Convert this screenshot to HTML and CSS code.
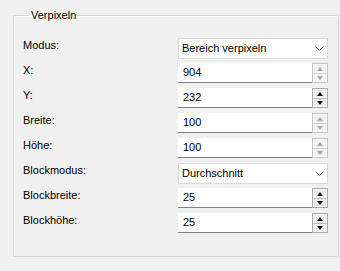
FILE: index.html
```html
<!DOCTYPE html>
<html>
<head>
<meta charset="utf-8">
<link rel="stylesheet" href="styles.css">
</head>
<body>
<fieldset class="group">
  <legend class="title">Verpixeln</legend>
  <div class="rows">
    <div class="row"><span class="label">Modus:</span>
      <div class="combo"><span class="val">Bereich verpixeln</span><svg class="chev" width="9" height="5" viewBox="0 0 9 5"><path d="M0.5 0.5 L4.5 4.5 L8.5 0.5" fill="none" stroke="#707070" stroke-width="1"/></svg></div></div>
    <div class="row"><span class="label">X:</span>
      <div class="spin"><span class="edit">904</span><div class="btns dim"><span class="b"><i class="up"></i></span><span class="b"><i class="dn"></i></span></div></div></div>
    <div class="row"><span class="label">Y:</span>
      <div class="spin"><span class="edit">232</span><div class="btns"><span class="b"><i class="up"></i></span><span class="b"><i class="dn"></i></span></div></div></div>
    <div class="row"><span class="label">Breite:</span>
      <div class="spin"><span class="edit">100</span><div class="btns dim"><span class="b"><i class="up"></i></span><span class="b"><i class="dn"></i></span></div></div></div>
    <div class="row"><span class="label">Höhe:</span>
      <div class="spin"><span class="edit">100</span><div class="btns dim"><span class="b"><i class="up"></i></span><span class="b"><i class="dn"></i></span></div></div></div>
    <div class="row"><span class="label">Blockmodus:</span>
      <div class="combo"><span class="val">Durchschnitt</span><svg class="chev" width="9" height="5" viewBox="0 0 9 5"><path d="M0.5 0.5 L4.5 4.5 L8.5 0.5" fill="none" stroke="#707070" stroke-width="1"/></svg></div></div>
    <div class="row"><span class="label">Blockbreite:</span>
      <div class="spin"><span class="edit">25</span><div class="btns"><span class="b"><i class="up"></i></span><span class="b"><i class="dn"></i></span></div></div></div>
    <div class="row"><span class="label">Blockhöhe:</span>
      <div class="spin"><span class="edit">25</span><div class="btns"><span class="b"><i class="up"></i></span><span class="b"><i class="dn"></i></span></div></div></div>
  </div>
</fieldset>
</body>
</html>
```
FILE: styles.css
```css
html, body {
  margin: 0;
  padding: 0;
  background: #f0f0f0;
  font-family: "Liberation Sans", Arial, sans-serif;
  font-size: 11px;
  color: #000;
}
body {
  padding: 9px 0 0 13px;
  height: 271px;
  box-sizing: border-box;
}
.group {
  margin: 0;
  width: 326px;
  height: 248px;
  box-sizing: border-box;
  border: 1px solid #d6d6d6;
  box-shadow: inset 1px 1px 0 #fcfcfc;
  padding: 0 10px 0 9px;
}
.title {
  padding: 0 2px;
  margin-left: 6px;
  line-height: 13px;
  color: #000;
}
.rows {
  display: flex;
  flex-direction: column;
  padding-top: 16px;
}
.row {
  display: flex;
  justify-content: space-between;
  align-items: flex-start;
  height: 25px;
}
.label {
  line-height: 14px;
}
.combo {
  width: 150px;
  height: 21px;
  box-sizing: border-box;
  background: #fff;
  border: 1px solid #d9d9d9;
  display: flex;
  align-items: center;
  justify-content: space-between;
  padding: 0 3px 0 3px;
}
.combo .val {
  line-height: 19px;
}
.chev {
  display: block;
}
.spin {
  width: 150px;
  height: 20px;
  display: flex;
}
.edit {
  flex: 1;
  background: #fff;
  border-bottom: 1px solid #808080;
  box-sizing: border-box;
  line-height: 19px;
  padding-left: 5px;
}
.btns {
  width: 16px;
  height: 20px;
  box-sizing: border-box;
  border: 1px solid #acacac;
  display: flex;
  flex-direction: column;
  background: #ececec;
}
.b {
  flex: 1;
  display: flex;
  align-items: center;
  justify-content: center;
  border: 1px solid #fafafa;
}
.b + .b {
  border-top: 1px solid #b8b8b8;
}
.btns.dim {
  background: #f2f2f2;
  border-color: #c4c4c4;
}
.btns.dim .b + .b {
  border-top-color: #d0d0d0;
}
.up, .dn {
  width: 0;
  height: 0;
  border-left: 3px solid transparent;
  border-right: 3px solid transparent;
}
.up {
  border-bottom: 4px solid #000;
}
.dn {
  border-top: 4px solid #000;
}
.dim .up {
  border-bottom-color: #a8a8a8;
}
.dim .dn {
  border-top-color: #a8a8a8;
}
```
